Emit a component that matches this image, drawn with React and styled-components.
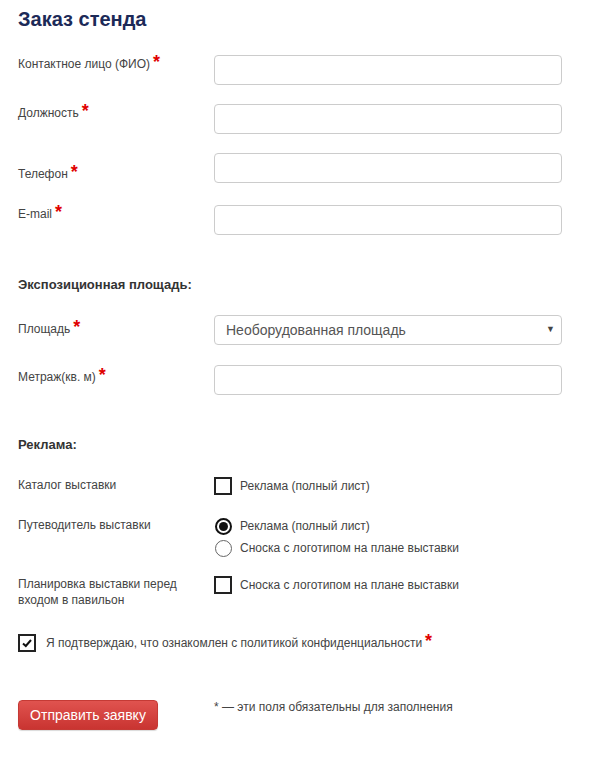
import React from 'react';
import styled, { createGlobalStyle } from 'styled-components';

const Global = createGlobalStyle`
    body{
        margin:0;
        background:#fff;
        font-family:Arial,'Liberation Sans',sans-serif;
    }
`;

const Page = styled.div`
    padding:7px 18px 30px 18px;
    width:544px;
    color:#444;
`;

const Title = styled.h1`
    margin:0;
    font-size:20px;
    line-height:24px;
    font-weight:bold;
    color:#1c2a58;
`;

const Row = styled.div`
    display:grid;
    grid-template-columns:196px 348px;
    margin-top:${p => p.top || 0}px;
`;

const Label = styled.div`
    font-size:12px;
    line-height:16px;
    padding-top:${p => p.pad || 0}px;
    padding-right:20px;
    color:#444;
`;

const Star = styled.span`
    color:#e00000;
    font-size:18px;
    font-weight:bold;
    line-height:0;
    margin-left:3px;
`;

const Input = styled.input`
    box-sizing:border-box;
    width:100%;
    height:30px;
    border:1px solid #ccc;
    border-radius:4px;
    padding:0 10px;
    font-size:14px;
    font-family:inherit;
    outline:none;
`;

const SelectBox = styled.div`
    position:relative;
    select{
        appearance:none;
        -webkit-appearance:none;
        box-sizing:border-box;
        width:100%;
        height:30px;
        border:1px solid #ccc;
        border-radius:4px;
        padding:0 11px;
        background:#fff;
        color:#555;
        font-size:14px;
        font-family:inherit;
        outline:none;
    }
    span{
        position:absolute;
        right:7px;
        top:9px;
        font-size:9px;
        color:#444;
        pointer-events:none;
    }
`;

const Heading = styled.h3`
    margin:${p => p.top || 0}px 0 0 0;
    font-size:13px;
    line-height:16px;
    font-weight:bold;
    color:#333;
`;

const Options = styled.div`
    display:flex;
    flex-direction:column;
    gap:4px;
`;

const Option = styled.label`
    display:flex;
    align-items:center;
    gap:8px;
    font-size:12px;
    line-height:16px;
    color:#444;
    height:18px;
`;

const Box = styled.span`
    box-sizing:border-box;
    width:18px;
    height:18px;
    border:2px solid #222;
    display:flex;
    align-items:center;
    justify-content:center;
    flex-shrink:0;
`;

const Radio = styled.span`
    box-sizing:border-box;
    width:17px;
    height:17px;
    margin-left:1px;
    border-radius:50%;
    border:${p => p.on ? '2px solid #111' : '1.5px solid #666'};
    display:flex;
    align-items:center;
    justify-content:center;
    flex-shrink:0;
    &::after{
        content:'';
        display:${p => p.on ? 'block' : 'none'};
        width:9px;
        height:9px;
        border-radius:50%;
        background:#111;
    }
`;

const Confirm = styled.label`
    display:flex;
    align-items:center;
    gap:10px;
    margin-top:26px;
    font-size:12px;
    color:#444;
`;

const Bottom = styled.div`
    display:grid;
    grid-template-columns:196px 348px;
    margin-top:48px;
    align-items:start;
`;

const Submit = styled.button`
    width:140px;
    height:30px;
    border:1px solid #c53a35;
    border-radius:4px;
    background:linear-gradient(#e0534f,#c93431);
    color:#fff;
    font-size:14px;
    font-family:inherit;
    box-shadow:0 1px 1px rgba(0,0,0,0.15);
    cursor:pointer;
`;

const Note = styled.div`
    font-size:12px;
    line-height:16px;
    color:#444;
    margin-top:-1px;
`;

const Check = () => (
    <svg width="12" height="12" viewBox="0 0 12 12">
        <polyline points="2,6.5 4.8,9 10,3" fill="none" stroke="#111" strokeWidth="2"/>
    </svg>
);

const App = () => {
    return(
        <>
            <Global/>
            <Page>
                <Title>Заказ стенда</Title>
                <Row top={24}>
                    <Label pad={1}>Контактное лицо (ФИО)<Star>*</Star></Label>
                    <Input/>
                </Row>
                <Row top={19}>
                    <Label pad={1}>Должность<Star>*</Star></Label>
                    <Input/>
                </Row>
                <Row top={19}>
                    <Label pad={13}>Телефон<Star>*</Star></Label>
                    <Input/>
                </Row>
                <Row top={22}>
                    <Label pad={1}>E-mail<Star>*</Star></Label>
                    <Input/>
                </Row>

                <Heading top={42}>Экспозиционная площадь:</Heading>
                <Row top={22}>
                    <Label pad={6}>Площадь<Star>*</Star></Label>
                    <SelectBox>
                        <select defaultValue="1">
                            <option value="1">Необорудованная площадь</option>
                            <option value="2">Оборудованная площадь</option>
                        </select>
                        <span>▼</span>
                    </SelectBox>
                </Row>
                <Row top={20}>
                    <Label pad={4}>Метраж(кв. м)<Star>*</Star></Label>
                    <Input/>
                </Row>

                <Heading top={42}>Реклама:</Heading>
                <Row top={24}>
                    <Label>Каталог выставки</Label>
                    <Options>
                        <Option><Box/>Реклама (полный лист)</Option>
                    </Options>
                </Row>
                <Row top={22}>
                    <Label>Путеводитель выставки</Label>
                    <Options>
                        <Option><Radio on/>Реклама (полный лист)</Option>
                        <Option><Radio/>Сноска с логотипом на плане выставки</Option>
                    </Options>
                </Row>
                <Row top={19}>
                    <Label>Планировка выставки перед входом в павильон</Label>
                    <Options>
                        <Option><Box/>Сноска с логотипом на плане выставки</Option>
                    </Options>
                </Row>

                <Confirm>
                    <Box><Check/></Box>
                    <span>Я подтверждаю, что ознакомлен с политикой конфиденциальности<Star>*</Star></span>
                </Confirm>

                <Bottom>
                    <Submit>Отправить заявку</Submit>
                    <Note>* — эти поля обязательны для заполнения</Note>
                </Bottom>
            </Page>
        </>
    );
}

export default App;
